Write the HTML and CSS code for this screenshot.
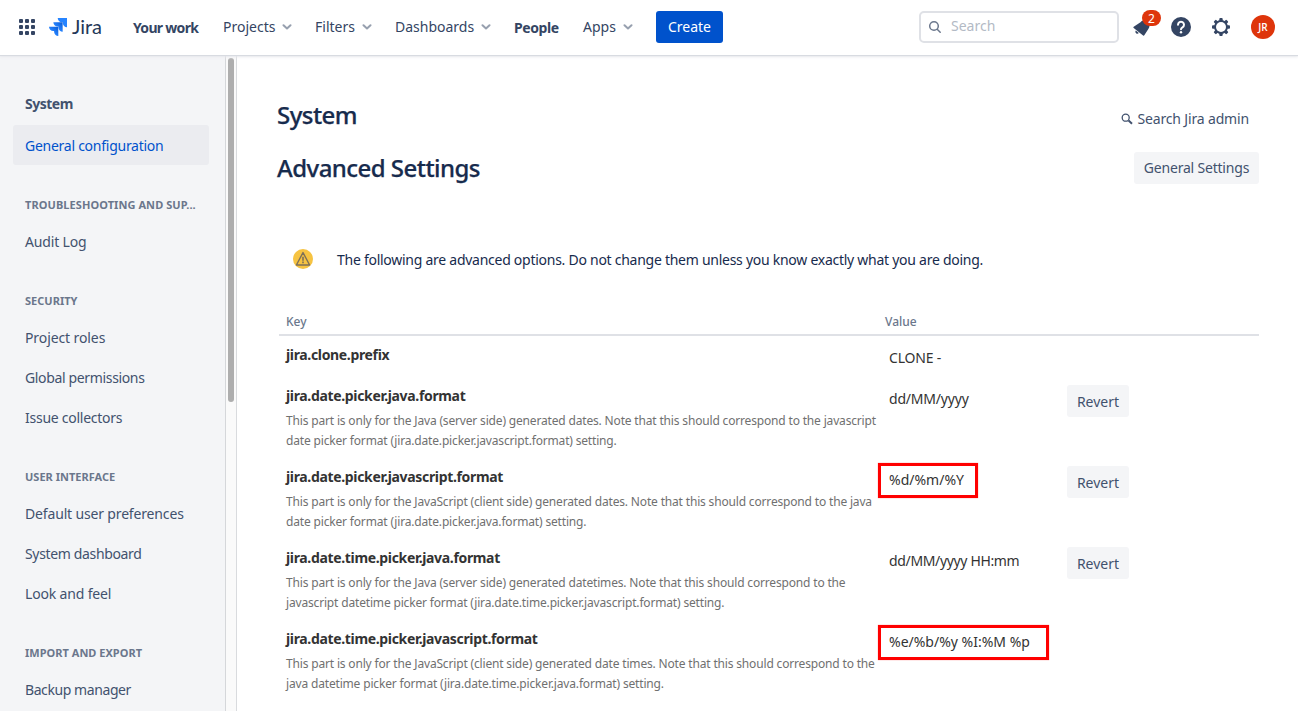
FILE: index.html
```html
<!DOCTYPE html>
<html lang="en">
<head>
<meta charset="utf-8">
<title>Advanced Settings - Jira</title>
<link rel="stylesheet" href="styles.css">
</head>
<body>
<header class="topbar">
  <svg class="switcher" width="16" height="16" viewBox="0 0 16 16"><g fill="#344563"><rect width="4" height="4" rx="1"/><rect x="6" width="4" height="4" rx="1"/><rect x="12" width="4" height="4" rx="1"/><rect y="6" width="4" height="4" rx="1"/><rect x="6" y="6" width="4" height="4" rx="1"/><rect x="12" y="6" width="4" height="4" rx="1"/><rect y="12" width="4" height="4" rx="1"/><rect x="6" y="12" width="4" height="4" rx="1"/><rect x="12" y="12" width="4" height="4" rx="1"/></g></svg>
  <div class="logo">
    <svg width="18" height="18" viewBox="0 0 18 18">
      <defs><linearGradient id="fade" x1="1" y1="0" x2="0.4" y2="0.6"><stop offset="0" stop-color="#0a5bd6"/><stop offset="1" stop-color="#2684ff"/></linearGradient></defs>
      <path fill="#2684ff" d="M8.700 0H18v9.300a4.200 4.200 0 0 1-4.200-4.200V4.200h-.9A4.200 4.200 0 0 1 8.700 0z"/>
      <path fill="url(#fade)" d="M4.350 4.350h9.300v9.300a4.200 4.200 0 0 1-4.200-4.200v-.9h-.9a4.200 4.200 0 0 1-4.200-4.200z"/>
      <path fill="url(#fade)" d="M0 8.700h9.300V18a4.200 4.200 0 0 1-4.200-4.200v-.9h-.9A4.200 4.200 0 0 1 0 8.700z"/>
    </svg>
    <span class="wordmark">Jira</span>
  </div>
  <nav class="menu">
    <a class="item strong w-work">Your work</a>
    <a class="item w-projects">Projects<svg class="chev" width="10" height="6" viewBox="0 0 10 6"><path d="M1.500 1.200 5 4.500 8.500 1.200"/></svg></a>
    <a class="item w-filters">Filters<svg class="chev" width="10" height="6" viewBox="0 0 10 6"><path d="M1.500 1.200 5 4.500 8.500 1.200"/></svg></a>
    <a class="item w-dash">Dashboards<svg class="chev" width="10" height="6" viewBox="0 0 10 6"><path d="M1.500 1.200 5 4.500 8.500 1.200"/></svg></a>
    <a class="item strong w-people">People</a>
    <a class="item w-apps">Apps<svg class="chev" width="10" height="6" viewBox="0 0 10 6"><path d="M1.500 1.200 5 4.500 8.500 1.200"/></svg></a>
  </nav>
  <button class="create">Create</button>
  <div class="search">
    <svg width="14" height="14" viewBox="0 0 14 14"><circle cx="6" cy="6" r="4.300"/><path d="M9.200 9.200 12.200 12.200"/></svg>
    <span>Search</span>
  </div>
  <div class="bell">
    <svg width="24" height="24" viewBox="0 0 24 24"><path fill="#344563" d="M4.700 11.800 11.500 7.200C13.500 5 17 4.500 19 6.500s2 5 .5 7.200L15.300 20.300a.8.800 0 0 1-1.200.1L4.700 13.100a.8.800 0 0 1 0-1.300z"/><path fill="#344563" d="M6.800 15.600 9.800 18a1.900 1.900 0 0 1-3-2.400z"/></svg>
    <span class="badge">2</span>
  </div>
  <svg class="help" width="20" height="20" viewBox="0 0 20 20"><circle cx="10" cy="10" r="10" fill="#344563"/><path fill="none" stroke="#fff" stroke-width="2" stroke-linecap="round" stroke-linejoin="round" d="M7 7.700a3 3 0 1 1 4.500 2.600c-.9.500-1.500.9-1.500 2"/><circle cx="10" cy="15.300" r="1.200" fill="#fff"/></svg>
  <svg class="gear" width="18" height="18" viewBox="-9 -9 18 18"><g fill="#344563"><g id="teeth"><rect x="-1.700" y="-9" width="3.400" height="18" rx="1"/><rect x="-9" y="-1.700" width="18" height="3.400" rx="1"/></g><use href="#teeth" transform="rotate(45)"/><circle r="6.900"/></g><circle r="5" fill="#fff"/></svg>
  <div class="avatar">JR</div>
</header>
<div class="shell">
  <aside class="sidebar">
    <h2 class="side-title"><span>System</span></h2>
    <a class="link active"><span class="t25">General configuration</span></a>
    <h3 class="group"><span class="wide">TROUBLESHOOTING AND SUP...</span></h3>
    <a class="link"><span class="t15">Audit Log</span></a>
    <h3 class="group"><span>SECURITY</span></h3>
    <a class="link"><span class="t10">Project roles</span></a>
    <a class="link"><span class="t35">Global permissions</span></a>
    <a class="link"><span class="t25">Issue collectors</span></a>
    <h3 class="group"><span>USER INTERFACE</span></h3>
    <a class="link"><span class="t15">Default user preferences</span></a>
    <a class="link"><span class="t35">System dashboard</span></a>
    <a class="link"><span class="t15">Look and feel</span></a>
    <h3 class="group"><span>IMPORT AND EXPORT</span></h3>
    <a class="link"><span class="t40">Backup manager</span></a>
  </aside>
  <div class="scrolltrack"><div class="thumb"></div></div>
  <main class="content">
    <div class="row head"><h1><span>System</span></h1>
      <a class="admin"><svg width="12" height="12" viewBox="0 0 12 12"><circle cx="4.700" cy="4.700" r="3.500" stroke-width="1.300"/><path stroke-width="2" d="M7.600 7.600 11 10.800"/></svg><span class="t15">Search Jira admin</span></a></div>
    <div class="row sub"><h1><span>Advanced Settings</span></h1><button class="btn"><span class="t20">General Settings</span></button></div>
    <div class="warning"><svg width="20" height="20" viewBox="0 0 20 20"><circle cx="10" cy="10" r="10" fill="#f6c342"/><path fill="none" stroke="#7d7058" stroke-width="1.400" stroke-linejoin="round" d="M10 3.600 16.600 16H3.400z"/><path stroke="#7d7058" stroke-width="1.600" d="M10 7.700v4M10 12.600v1.600"/></svg><p><span>The following are advanced options. Do not change them unless you know exactly what you are doing.</span></p></div>
    <div class="table">
      <div class="thead"><span>Key</span><span>Value</span></div>
      <div class="tr first"><div class="key"><b>jira.clone.prefix</b></div><div class="val"><span class="t20">CLONE -</span></div></div>
      <div class="tr"><div class="key"><b>jira.date.picker.java.format</b><p>This part is only for the Java (server side) generated dates. Note that this should correspond to the javascript</p><p>date picker format (jira.date.picker.javascript.format) setting.</p></div><div class="val"><span class="t20">dd/MM/yyyy</span></div><button class="btn revert">Revert</button></div>
      <div class="tr"><div class="key"><b>jira.date.picker.javascript.format</b><p>This part is only for the JavaScript (client side) generated dates. Note that this should correspond to the java</p><p>date picker format (jira.date.picker.java.format) setting.</p></div><div class="val"><span>%d/%m/%Y</span><i class="mark short"></i></div><button class="btn revert">Revert</button></div>
      <div class="tr"><div class="key"><b>jira.date.time.picker.java.format</b><p>This part is only for the Java (server side) generated datetimes. Note that this should correspond to the</p><p>javascript datetime picker format (jira.date.time.picker.javascript.format) setting.</p></div><div class="val"><span class="t35">dd/MM/yyyy HH:mm</span></div><button class="btn revert">Revert</button></div>
      <div class="tr"><div class="key"><b>jira.date.time.picker.javascript.format</b><p>This part is only for the JavaScript (client side) generated date times. Note that this should correspond to the</p><p>java datetime picker format (jira.date.time.picker.java.format) setting.</p></div><div class="val"><span>%e/%b/%y %I:%M %p</span><i class="mark long"></i></div></div>
    </div>
  </main>
</div>
</body>
</html>
```
FILE: styles.css
```css
* { box-sizing: border-box; }
body { margin: 0; width: 1298px; height: 711px; overflow: hidden; background: #fff; color: #42526e; font: 14px/20px "Noto Sans", sans-serif; }
h1, h2, h3, p { margin: 0; }
button { border: 0; font: inherit; padding: 0; }
span, b { white-space: nowrap; }

/* tracking steps */
.t10 { letter-spacing: -.1px; }
.t15 { letter-spacing: -.16px; }
.t20 { letter-spacing: -.2px; }
.t25 { letter-spacing: -.26px; }
.t35 { letter-spacing: -.35px; }
.t40 { letter-spacing: -.42px; }
.wide { letter-spacing: .08px; }

.topbar { position: relative; z-index: 2; display: flex; align-items: center; height: 55px; padding: 0 23px 1px 19px; background: #fff; box-shadow: 0 1px 1px #d8dbe1, 0 2px 3px #e9ebef; }
.logo { display: flex; align-items: center; margin-left: 14px; width: 84px; }
.wordmark { margin-left: 5px; padding-bottom: 2px; font: 20px/24px Lato, sans-serif; color: #253858; letter-spacing: -.1px; }
.menu { display: flex; color: #344563; }
.item { display: flex; align-items: center; }
.strong { font: 700 14px/20px "Noto Sans", sans-serif; letter-spacing: -.7px; padding-top: 1px; }
.w-work { width: 90px; }
.w-projects { width: 92px; }
.w-filters { width: 80px; }
.w-dash { width: 119px; }
.w-people { width: 69px; letter-spacing: -.4px; }
.w-apps { width: 73px; }
.chev { margin-left: 7px; fill: none; stroke: #97a0af; stroke-width: 2; stroke-linecap: round; stroke-linejoin: round; }
.create { width: 67px; height: 32px; border-radius: 3px; background: #0052cc; color: #fff; }
.search { display: flex; align-items: center; gap: 9px; width: 200px; height: 32px; margin-left: auto; padding: 0 7px 2px; border: 2px solid #dfe1e6; border-radius: 5px; color: #b3bac5; }
.search svg { fill: none; stroke: #6b778c; stroke-width: 1.5; stroke-linecap: round; margin-top: 2px; }
.bell { position: relative; width: 24px; height: 24px; margin-left: 10px; }
.badge { position: absolute; left: 13px; top: -5px; width: 19px; height: 16px; border-radius: 8px; background: #de350b; color: #fff; font-size: 12px; line-height: 17px; text-align: center; }
.help { margin-left: 18px; }
.gear { margin-left: 21px; }
.avatar { width: 24px; height: 24px; margin-left: 21px; border-radius: 50%; background: #de350b; color: #fff; font: 600 10px/24px "Open Sans", sans-serif; text-align: center; }

.shell { display: flex; height: 656px; }
.sidebar { width: 225px; padding: 29px 16px 0 13px; background: #f4f5f7; color: #42526e; }
.side-title { height: 41px; padding: 10px 12px; font: 700 14px/20px "Noto Sans", sans-serif; letter-spacing: -.5px; }
.link { display: block; height: 40px; padding: 11px 12px 9px; }
.active { border-radius: 3px; background: #ebecf0; color: #0052cc; }
.group { height: 56px; padding: 32px 12px 8px; font: 700 11px/16px "Noto Sans", sans-serif; color: #6b778c; letter-spacing: .02px; }
.scrolltrack { width: 12px; padding: 3px 2px; background: #fafafa; border-left: 1px solid #d5d7da; border-right: 1px solid #d9dbde; }
.thumb { width: 6px; height: 344px; border-radius: 3px; background: #aeaeae; }

.content { flex: 1; padding: 44px 39px 0 40px; }
.row { display: flex; justify-content: space-between; }
.row h1 { font: 500 24px/32px "Noto Sans", sans-serif; color: #172b4d; letter-spacing: -.54px; -webkit-text-stroke: .25px #172b4d; }
.head { height: 53px; }
.sub { height: 54px; }
.admin { display: flex; align-items: center; height: 20px; margin: 10px 10px 0 0; gap: 5px; }
.admin svg { fill: none; stroke: #42526e; }
.btn { height: 32px; border-radius: 3px; background: #f4f5f7; color: #42526e; }
.sub .btn { width: 125px; }
.warning { display: flex; padding: 43px 16px 0; height: 105px; gap: 24px; color: #172b4d; letter-spacing: -.265px; }
.warning p { padding-top: 1px; }
.table { margin-left: 2px; color: #333; }
.thead { display: grid; grid-template-columns: 599px 1fr; height: 25px; padding: 1px 7px 0; border-bottom: 2px solid #dfe1e6; color: #6b778c; font: 500 12px/20px "Noto Sans", sans-serif; }
.tr { display: grid; grid-template-columns: 599px 182px 62px; height: 81px; padding: 8px 7px 0; }
.first { height: 41px; }
.key { padding-top: 1px; }
.key b { display: block; font: 700 14px/20px "Noto Sans", sans-serif; height: 25px; letter-spacing: -.34px; }
.key p { font-size: 12px; line-height: 20px; color: #707070; white-space: nowrap; letter-spacing: -.168px; }
.val { position: relative; padding: 4px 4px 0; }
.revert { width: 62px; padding-top: 2px; }
.mark { position: absolute; left: -7px; top: -3px; height: 35px; border: 3px solid #f00; box-shadow: 0 0 1px #f77; }
.short { width: 100px; }
.long { width: 171px; }
```
